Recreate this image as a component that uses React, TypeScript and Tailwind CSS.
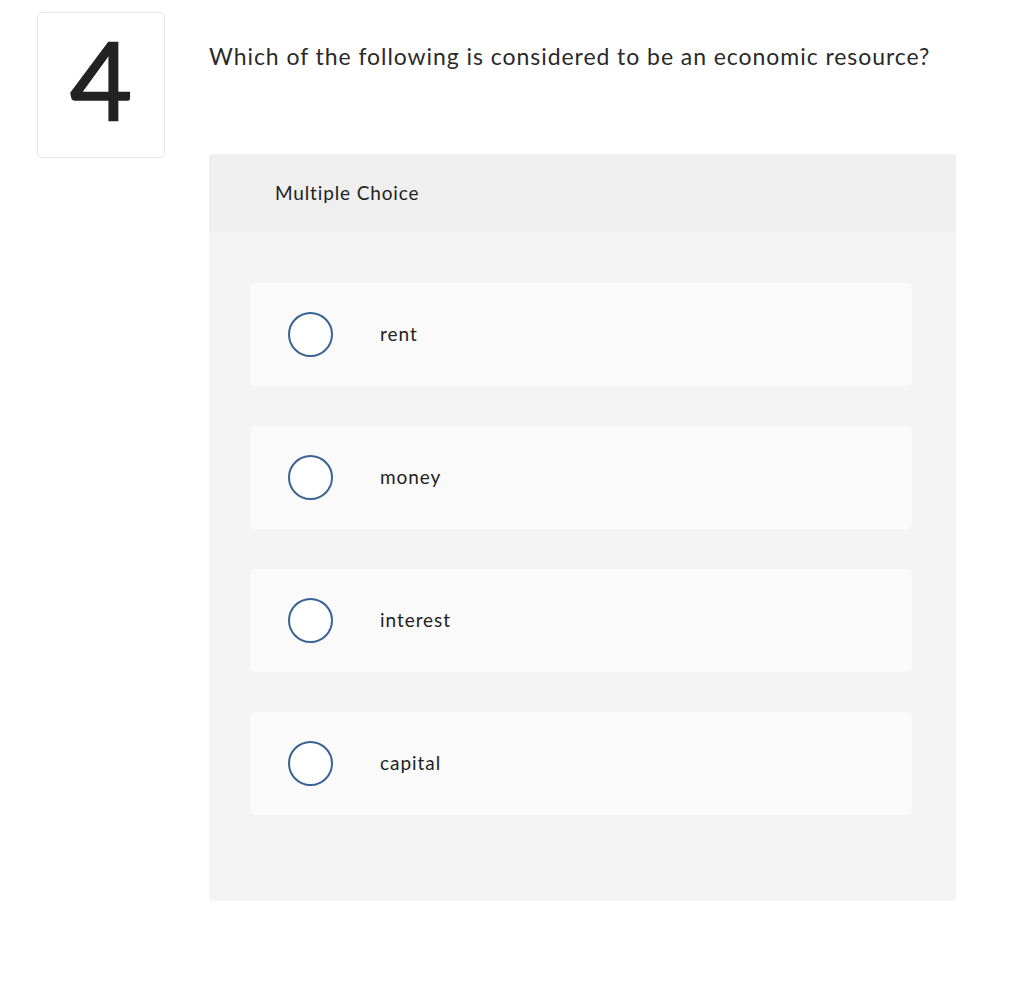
const options = ['rent', 'money', 'interest', 'capital']

export default function App() {
  return (
    <div className="w-[1024px] h-[1007px] bg-white text-[#222] font-['Lato','Liberation_Sans',sans-serif]">
      <div className="flex pt-[12px] pl-[37px]">
        {/* question number */}
        <div className="w-[128px] h-[146px] shrink-0 rounded-[5px] border border-[#e6e6e6] flex items-center justify-center">
          <span className="text-[108px] leading-none text-[#222] -mt-[12px] [-webkit-text-stroke:1.5px_#222]">4</span>
        </div>

        <div className="ml-[44px] w-[747px]">
          <h2 className="mt-[30px] text-[23px] leading-[28px] tracking-[0.041em] text-[#2a2a2a]">
            Which of the following is considered to be an economic resource?
          </h2>

          <div className="mt-[84px] rounded-[4px] bg-[#f4f4f4] overflow-hidden">
            <div className="h-[78px] bg-[#efefef] flex items-center pl-[66px] text-[19px] tracking-[0.045em] text-[#222]">
              Multiple Choice
            </div>
            <div className="flex flex-col gap-[40px] pt-[51px] pb-[86px] pl-[41px] pr-[44px]">
              {options.map(o => (
                <div key={o} className="h-[103px] rounded-[5px] bg-[#fafafa] flex items-center pl-[38px]">
                  <span className="w-[45px] h-[45px] rounded-full border-2 border-[#3a6294] bg-white shrink-0" />
                  <span className="ml-[47px] text-[19px] tracking-[0.05em] text-[#222]">{o}</span>
                </div>
              ))}
            </div>
          </div>
        </div>
      </div>
    </div>
  )
}
